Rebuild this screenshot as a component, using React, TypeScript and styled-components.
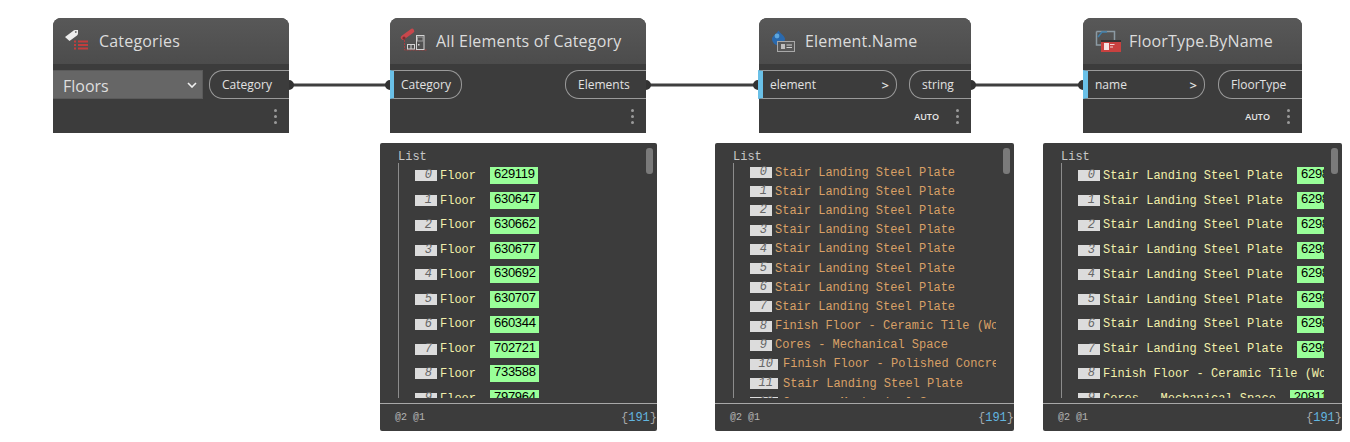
import React from 'react';
import styled, { createGlobalStyle } from 'styled-components';

const GlobalStyle = createGlobalStyle`
  html, body {
    margin: 0;
    padding: 0;
    background: #ffffff;
  }
`;

interface ListRow {
  index: number;
  text: string;
  id?: string;
}

const floorIds = ['629119', '630647', '630662', '630677', '630692', '630707', '660344', '702721', '733588', '797964'];
const stair = 'Stair Landing Steel Plate';
const names = [stair, stair, stair, stair, stair, stair, stair, stair, 'Finish Floor - Ceramic Tile (Wood)', 'Cores - Mechanical Space', 'Finish Floor - Polished Concrete', stair, 'Cores - Mechanical Space'];
const typeIds = ['629815', '629815', '629815', '629815', '629815', '629815', '629815', '629815', '', '208110'];

const floorRows: ListRow[] = floorIds.map((id, index) => ({ index, text: 'Floor', id }));
const nameRows: ListRow[] = names.map((text, index) => ({ index, text }));
const typeRows: ListRow[] = typeIds.map((id, index) => ({ index, text: names[index], id: id || undefined }));

const CategoriesIcon = () => (
  <IconSvg viewBox="0 0 26 26">
    <path d="M2 9 L10 3 Q11 2 12 2 L15 2 L15 5.5 Q15 6.5 14 7.5 L6.5 13 Z" fill="#ececec" />
    <circle cx="12.8" cy="4" r="0.9" fill="#6a6a6a" />
    <g fill="#c23d3d">
      <rect x="11" y="12.5" width="2" height="2" />
      <rect x="15" y="12.5" width="10" height="2" />
      <rect x="11" y="16" width="2" height="2" />
      <rect x="15" y="16" width="10" height="2" />
      <rect x="11" y="19.5" width="2" height="2" />
      <rect x="15" y="19.5" width="10" height="2" />
    </g>
  </IconSvg>
);

const AllElementsIcon = () => (
  <IconSvg viewBox="0 0 26 26">
    <path d="M3 9.5 L12 3" stroke="#c9474c" strokeWidth="4.5" strokeLinecap="round" />
    <circle cx="4" cy="10" r="1.6" fill="#7d2c2f" />
    <path d="M4.5 12 V22 H27" fill="none" stroke="#a93c3e" strokeDasharray="2 1" />
    <rect x="7.5" y="16.5" width="7" height="4.5" fill="none" stroke="#d4d4d4" />
    <path d="M11 16.5 V21" stroke="#d4d4d4" />
    <rect x="16.5" y="7.5" width="7.5" height="14" fill="none" stroke="#d4d4d4" />
    <rect x="17.5" y="9" width="5.5" height="4" fill="none" stroke="#9a9a9a" />
    <rect x="18" y="16" width="1.5" height="1.5" fill="#d4d4d4" />
  </IconSvg>
);

const ElementNameIcon = () => (
  <IconSvg viewBox="0 0 26 26">
    <path d="M9.5 2.5 C12 6 16 8 16 11 A6.5 6.5 0 0 1 3 11 C3 8 7 6 9.5 2.5 Z" fill="#2a69ad" />
    <circle cx="8" cy="8" r="2.4" fill="#5ea6dc" />
    <rect x="8.5" y="13.5" width="17" height="10" fill="#585858" stroke="#a8a8a8" />
    <rect x="12" y="16" width="4" height="5" fill="#bdbdbd" />
    <path d="M17.5 17 H23 M17.5 19.5 H23" stroke="#cfcfcf" />
  </IconSvg>
);

const FloorTypeIcon = () => (
  <IconSvg viewBox="0 0 26 26">
    <path d="M3.5 3.5 H21.5 V13 M3.5 3.5 V17 H8" fill="none" stroke="#8c9aa3" strokeWidth="1.5" />
    <path d="M5 9 L9 4 H14" fill="none" stroke="#3f7da8" strokeWidth="1.6" />
    <rect x="8" y="13" width="20" height="11" fill="#c8413f" />
    <rect x="8" y="12" width="20" height="2" fill="#333333" />
    <rect x="11" y="15" width="5" height="7" fill="#f4e2e2" />
    <path d="M17 16.5 H21.5 M17 19 H20" stroke="#f4d5d5" />
  </IconSvg>
);

const Chevron = () => (
  <svg width="10" height="6" viewBox="0 0 10 6">
    <path d="M1 1 L5 5 L9 1" fill="none" stroke="#f0f0f0" strokeWidth="1.6" />
  </svg>
);

const Wires = () => (
  <WireLayer width="1350" height="442" viewBox="0 0 1350 442">
    <path d="M292 85 H387 M649 85 H756 M974 85 H1080" stroke="#3f3f3f" strokeWidth="3" fill="none" />
    <path d="M289 80 A5 5 0 0 1 289 90 Z M646 80 A5 5 0 0 1 646 90 Z M971 80 A5 5 0 0 1 971 90 Z" fill="#333" />
    <path d="M390 80 A5 5 0 0 0 390 90 Z M758 80 A5 5 0 0 0 758 90 Z M1083 80 A5 5 0 0 0 1083 90 Z" fill="#333" />
  </WireLayer>
);

interface WatchProps {
  left: number;
  width: number;
  clip: number;
  rowHeight: number;
  rowsTop?: number;
  rows: ListRow[];
  orange?: boolean;
}

const Watch = ({ left, width, clip, rowHeight, rowsTop = 0, rows, orange }: WatchProps) => (
  <WatchPanel $left={left} $width={width}>
    <Scrollbar />
    <Viewport $clip={clip}>
      <ListTitle>List</ListTitle>
      <Tree $top={rowsTop}>
        {rows.map((row) => (
          <Row key={row.index} $height={rowHeight}>
            <IndexBadge $wide={row.index > 9}>{row.index}</IndexBadge>
            <RowText $orange={orange}>{row.text}</RowText>
            {row.id && <IdChip>{row.id}</IdChip>}
          </Row>
        ))}
      </Tree>
    </Viewport>
    <WatchFooter>
      <Levels>@2 @1</Levels>
      <Count>
        {'{'}
        <CountValue>191</CountValue>
        {'}'}
      </Count>
    </WatchFooter>
  </WatchPanel>
);

const App = () => {
  return (
    <Canvas>
      <GlobalStyle />
      <Wires />

      <Node $left={53} $width={236}>
        <NodeHeader>
          <IconBox><CategoriesIcon /></IconBox>
          <NodeTitle>Categories</NodeTitle>
        </NodeHeader>
        <PortRow>
          <Dropdown>
            <DropdownLabel>Floors</DropdownLabel>
            <Chevron />
          </Dropdown>
          <OutputPort $width={80}>Category</OutputPort>
        </PortRow>
        <NodeFooter>
          <MenuDots><i /><i /><i /></MenuDots>
        </NodeFooter>
      </Node>

      <Node $left={390} $width={256}>
        <NodeHeader>
          <IconBox><AllElementsIcon /></IconBox>
          <NodeTitle>All Elements of Category</NodeTitle>
        </NodeHeader>
        <PortRow>
          <InputPort $width={72} $strip={4}>Category</InputPort>
          <OutputPort $width={81}>Elements</OutputPort>
        </PortRow>
        <NodeFooter>
          <MenuDots><i /><i /><i /></MenuDots>
        </NodeFooter>
      </Node>

      <Node $left={759} $width={212}>
        <NodeHeader>
          <IconBox><ElementNameIcon /></IconBox>
          <NodeTitle>Element.Name</NodeTitle>
        </NodeHeader>
        <PortRow>
          <InputPort $width={139} $strip={5} $overhang={1}>element<Arrow>&gt;</Arrow></InputPort>
          <OutputPort $width={62}>string</OutputPort>
        </PortRow>
        <NodeFooter>
          <Lacing>AUTO</Lacing>
          <MenuDots><i /><i /><i /></MenuDots>
        </NodeFooter>
      </Node>

      <Node $left={1083} $width={219}>
        <NodeHeader>
          <IconBox><FloorTypeIcon /></IconBox>
          <NodeTitle>FloorType.ByName</NodeTitle>
        </NodeHeader>
        <PortRow>
          <InputPort $width={122} $strip={5}>name<Arrow>&gt;</Arrow></InputPort>
          <OutputPort $width={84}>FloorType</OutputPort>
        </PortRow>
        <NodeFooter>
          <Lacing>AUTO</Lacing>
          <MenuDots><i /><i /><i /></MenuDots>
        </NodeFooter>
      </Node>

      <Watch left={380} width={277} clip={277} rowHeight={24.75} rowsTop={0.6} rows={floorRows} />
      <Watch left={715} width={299} clip={281} rowHeight={19.2} rows={nameRows} orange />
      <Watch left={1043} width={299} clip={281} rowHeight={24.75} rowsTop={0.6} rows={typeRows} />
    </Canvas>
  );
};

export default App;

const Canvas = styled.div`
  position: relative;
  width: 1350px;
  height: 442px;
  overflow: hidden;
  background: #ffffff;
  font-family: "Open Sans", "Noto Sans", sans-serif;
`;

const WireLayer = styled.svg`
  position: absolute;
  left: 0;
  top: 0;
`;

const IconSvg = styled.svg`
  width: 26px;
  height: 26px;
  overflow: visible;
`;

const Node = styled.div<{ $left: number; $width: number }>`
  position: absolute;
  left: ${({ $left }) => $left}px;
  top: 18px;
  width: ${({ $width }) => $width}px;
  height: 115px;
  display: flex;
  flex-direction: column;
  background: #3c3c3c;
  border-radius: 8px 8px 0 0;
`;

const NodeHeader = styled.div`
  display: flex;
  align-items: center;
  height: 46px;
  padding-left: 10px;
  gap: 10px;
  border-radius: 8px 8px 0 0;
  background: linear-gradient(#585858, #4c4c4c);
`;

const IconBox = styled.div`
  display: flex;
  width: 26px;
  height: 26px;
`;

const NodeTitle = styled.div`
  font-size: 16px;
  letter-spacing: 0.18px;
  color: #dcdcdc;
  white-space: nowrap;
`;

const PortRow = styled.div`
  display: flex;
  justify-content: space-between;
  margin-top: 6px;
  height: 29px;
`;

const Dropdown = styled.div`
  display: flex;
  align-items: center;
  justify-content: space-between;
  box-sizing: border-box;
  width: 150px;
  padding: 0 5px 0 10px;
  color: #dedede;
  background: #666666;
  border: 1px solid #5a5a5a;
  border-left: none;
`;

const DropdownLabel = styled.span`
  margin-top: 2px;
  font-size: 16px;
`;

const OutputPort = styled.div<{ $width: number }>`
  display: flex;
  align-items: center;
  box-sizing: border-box;
  width: ${({ $width }) => $width}px;
  padding-left: 12px;
  font-size: 12px;
  color: #e2e2e2;
  border: 1px solid #9a9a9a;
  border-right: none;
  border-radius: 14px 0 0 14px;
`;

const InputPort = styled.div<{ $width: number; $strip: number; $overhang?: number }>`
  display: flex;
  align-items: center;
  box-sizing: border-box;
  width: ${({ $width }) => $width}px;
  margin-left: ${({ $overhang }) => -($overhang ?? 0)}px;
  padding: 0 7px;
  font-size: 12px;
  color: #e2e2e2;
  border: 1px solid #9a9a9a;
  border-left: ${({ $strip }) => $strip}px solid #6ac0e7;
  border-radius: 0 14px 14px 0;
`;

const Arrow = styled.span`
  margin-left: auto;
  font-size: 13px;
  font-weight: 600;
`;

const NodeFooter = styled.div`
  display: flex;
  flex: 1;
  align-items: center;
  justify-content: flex-end;
  gap: 17px;
  padding-right: 12px;
`;

const Lacing = styled.span`
  font-size: 9px;
  font-weight: 600;
  color: #e8e8e8;
`;

const MenuDots = styled.div`
  display: flex;
  flex-direction: column;
  gap: 3px;

  i {
    display: block;
    width: 3px;
    height: 3px;
    border-radius: 50%;
    background: #9a9a9a;
  }
`;

const WatchPanel = styled.div<{ $left: number; $width: number }>`
  position: absolute;
  left: ${({ $left }) => $left}px;
  top: 143px;
  width: ${({ $width }) => $width}px;
  height: 288px;
  display: flex;
  flex-direction: column;
  background: #3c3c3c;
  border-radius: 2px;
  font-family: "Liberation Mono", "DejaVu Sans Mono", monospace;
`;

const Scrollbar = styled.div`
  position: absolute;
  right: 4px;
  top: 5px;
  width: 7px;
  height: 26px;
  border-radius: 3px;
  background: #7a7a7a;
`;

const Viewport = styled.div<{ $clip: number }>`
  box-sizing: border-box;
  width: ${({ $clip }) => $clip}px;
  height: 255px;
  padding: 8px 0 0 18px;
  overflow: hidden;
`;

const ListTitle = styled.div`
  font-size: 12px;
  line-height: 12px;
  color: #c8c8c8;
`;

const Tree = styled.div<{ $top: number }>`
  box-sizing: border-box;
  height: 240px;
  padding: ${({ $top }) => $top}px 0 0 16px;
  border-left: 1px solid #8c8c8c;
`;

const Row = styled.div<{ $height: number }>`
  display: flex;
  align-items: center;
  gap: 3px;
  height: ${({ $height }) => $height}px;
  white-space: nowrap;
`;

const IndexBadge = styled.span<{ $wide: boolean }>`
  flex: none;
  box-sizing: border-box;
  width: ${({ $wide }) => ($wide ? 28 : 22)}px;
  height: 11px;
  margin-right: ${({ $wide }) => ($wide ? 2 : 0)}px;
  padding-right: 5px;
  font-size: 12px;
  line-height: 11px;
  font-style: italic;
  text-align: right;
  color: #666666;
  background: #dcdcdc;
`;

const RowText = styled.span<{ $orange?: boolean }>`
  font-size: 12px;
  color: ${({ $orange }) => ($orange ? '#d9a066' : '#f2f0ab')};
`;

const IdChip = styled.span`
  margin-left: 11px;
  padding: 0 3px 0 4px;
  height: 17px;
  line-height: 14px;
  font-family: "Liberation Sans", Arial, sans-serif;
  font-size: 13px;
  letter-spacing: -0.3px;
  color: #000000;
  background: #99ff99;
`;

const WatchFooter = styled.div`
  display: flex;
  flex: 1;
  align-items: center;
  justify-content: space-between;
  margin-top: 5px;
  padding-left: 15px;
  border-top: 1px solid #a8a8a8;
  overflow: hidden;
`;

const Levels = styled.span`
  font-size: 10px;
  color: #b4b4b4;
`;

const Count = styled.span`
  font-size: 12px;
  color: #a8a8a8;
`;

const CountValue = styled.span`
  color: #62b6e0;
`;
